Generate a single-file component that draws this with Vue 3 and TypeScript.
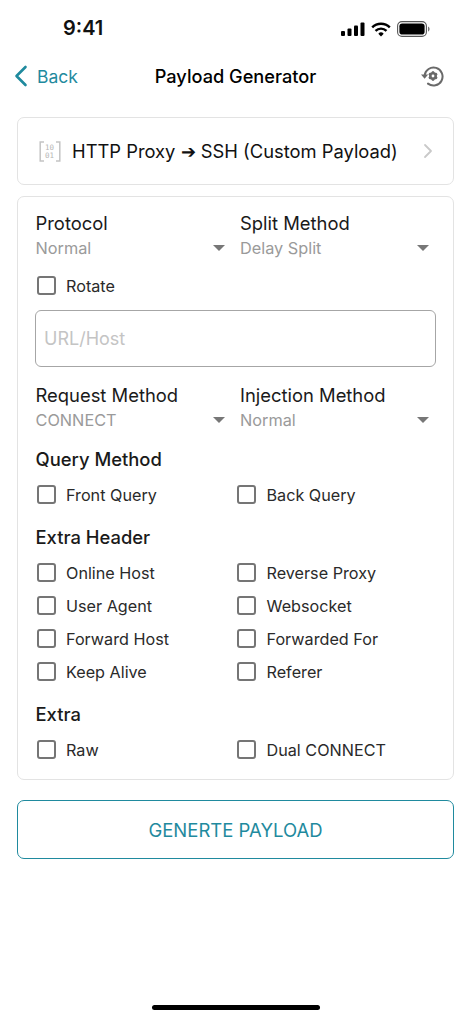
<script setup lang="ts">
const firstSelects = [
  { label: 'Protocol', value: 'Normal' },
  { label: 'Split Method', value: 'Delay Split' },
]
const secondSelects = [
  { label: 'Request Method', value: 'CONNECT' },
  { label: 'Injection Method', value: 'Normal' },
]
const query = ['Front Query', 'Back Query']
const headers = ['Online Host', 'Reverse Proxy', 'User Agent', 'Websocket', 'Forward Host', 'Forwarded For', 'Keep Alive', 'Referer']
const extra = ['Raw', 'Dual CONNECT']
</script>

<template>
  <div class="screen">
    <div class="status">
      <span class="time">9:41</span>
      <div class="status-icons">
        <svg width="24" height="14" viewBox="0 0 24 14"><rect x="0" y="9" width="4" height="5" rx="1"/><rect x="6.5" y="6.5" width="4" height="7.5" rx="1"/><rect x="13" y="3.5" width="4" height="10.5" rx="1"/><rect x="19.5" y="0.5" width="4" height="13.5" rx="1"/></svg>
        <svg width="20" height="15" viewBox="0 0 20 15" fill="none" stroke="#000" stroke-width="2.4"><path d="M1.2 5.4a12.6 12.6 0 0 1 17.6 0"/><path d="M4.5 8.8a8 8 0 0 1 11 0"/><path d="M10 14.4 7.3 11.7a3.8 3.8 0 0 1 5.4 0Z" fill="#000" stroke="none"/></svg>
        <svg width="33" height="16" viewBox="0 0 33 16"><rect x="0.6" y="0.6" width="28.8" height="14.8" rx="4.4" fill="none" stroke="#555" stroke-width="1.1"/><rect x="2.4" y="2.4" width="25.2" height="11.2" rx="2.8"/><path d="M31 5.4c1 .4 1.6 1.4 1.6 2.6s-.6 2.2-1.6 2.6Z" fill="#777"/></svg>
      </div>
    </div>

    <header class="nav">
      <div class="back">
        <svg width="14" height="22" viewBox="0 0 14 22" fill="none" stroke="#1f8a9e" stroke-width="2.6" stroke-linecap="round" stroke-linejoin="round"><path d="M11.5 2 2.5 11l9 9"/></svg>
        <span>Back</span>
      </div>
      <h1>Payload Generator</h1>
      <svg class="restore" width="24" height="24" viewBox="0 0 24 24" fill="none" stroke="#6a6a6a" stroke-width="2">
        <path d="M4.6 11.5A9 9 0 1 1 8 19.6" stroke-linecap="round"/>
        <path d="M1 10.6h7.2l-3.6 4.2Z" fill="#6a6a6a" stroke="none"/>
        <circle cx="13" cy="12" r="2.7" stroke-width="2.6"/>
        <path d="M13 7.2v2M13 14.8v2M8.9 9.6l1.7 1M15.4 13.4l1.7 1M8.9 14.4l1.7-1M15.4 10.6l1.7-1" stroke-width="2.2"/>
      </svg>
    </header>

    <main class="content">
      <section class="card picker">
        <svg width="22" height="21" viewBox="0 0 22 21" fill="none" stroke="#c4c4c4" stroke-width="1.5">
          <path d="M5 1H1.2v19H5M17 1h3.8v19H17"/>
          <text x="6" y="9" class="bits">10</text>
          <text x="6" y="17" class="bits">01</text>
        </svg>
        <span class="picker-text">HTTP Proxy ➔ SSH (Custom Payload)</span>
        <svg width="10" height="16" viewBox="0 0 10 16" fill="none" stroke="#c9c9c9" stroke-width="1.8" stroke-linecap="round" stroke-linejoin="round"><path d="M2 2l6 6-6 6"/></svg>
      </section>

      <section class="card form">
        <div class="selects">
          <div v-for="s in firstSelects" :key="s.label" class="select">
            <div class="sel-label">{{ s.label }}</div>
            <div class="sel-value"><span>{{ s.value }}</span><i class="caret"></i></div>
          </div>
        </div>
        <label class="check rotate"><i class="box"></i><span>Rotate</span></label>
        <div class="input">URL/Host</div>
        <div class="selects">
          <div v-for="s in secondSelects" :key="s.label" class="select">
            <div class="sel-label">{{ s.label }}</div>
            <div class="sel-value"><span>{{ s.value }}</span><i class="caret"></i></div>
          </div>
        </div>

        <h2 class="title query-title">Query Method</h2>
        <div class="checks">
          <label v-for="c in query" :key="c" class="check"><i class="box"></i><span>{{ c }}</span></label>
        </div>

        <h2 class="title">Extra Header</h2>
        <div class="checks">
          <label v-for="c in headers" :key="c" class="check"><i class="box"></i><span>{{ c }}</span></label>
        </div>

        <h2 class="title">Extra</h2>
        <div class="checks">
          <label v-for="c in extra" :key="c" class="check"><i class="box"></i><span>{{ c }}</span></label>
        </div>
      </section>

      <button class="generate" type="button">GENERTE PAYLOAD</button>
    </main>

    <div class="home"></div>
  </div>
</template>

<style>
html, body { margin: 0; background: #fff; }
</style>

<style scoped>
.screen {
  width: 471px;
  height: 1019px;
  position: relative;
  overflow: hidden;
  background: #fff;
  color: #111;
  font-family: Inter, "Liberation Sans", sans-serif;
  box-sizing: border-box;
}
.status {
  height: 56px;
  display: flex;
  justify-content: space-between;
  align-items: flex-start;
  padding: 16px 41px 0 63px;
  box-sizing: border-box;
}
.time { font-size: 20px; font-weight: 600; line-height: 24px; color: #111; }
.status-icons { display: flex; align-items: center; gap: 6px; padding-top: 5px; }
.nav {
  height: 40px;
  display: flex;
  align-items: center;
  justify-content: space-between;
  padding: 0 27px 0 14px;
  position: relative;
}
.back { display: flex; align-items: center; gap: 9px; color: #1f8a9e; font-size: 17.5px; }
.nav h1 {
  position: absolute;
  left: 0;
  right: 0;
  text-align: center;
  margin: 0;
  font-size: 18.2px;
  font-weight: 500;
  color: #000;
  pointer-events: none;
}
.content { padding: 21px 17px 0; display: flex; flex-direction: column; }
.card {
  border: 1.5px solid #e3e3e3;
  border-radius: 7px;
  box-sizing: border-box;
  background: #fff;
}
.picker {
  height: 68px;
  display: flex;
  align-items: center;
  padding: 0 20px 0 21px;
}
.bits { font-family: "DejaVu Sans Mono", monospace; font-size: 7.5px; fill: #b5b5b5; stroke: none; }
.picker-text { flex: 1; margin-left: 11px; font-size: 18.35px; color: #111; white-space: nowrap; }
.form {
  margin-top: 11px;
  height: 584px;
  padding: 14px 17px 0 17.5px;
}
.selects { display: grid; grid-template-columns: 204.5px 197px; }
.sel-label { font-size: 18.4px; line-height: 25px; color: #1a1a1a; }
.sel-value {
  display: flex;
  justify-content: space-between;
  align-items: center;
  height: 23px;
  margin-bottom: 2px;
  font-size: 16.3px;
  color: #9a9a9a;
}
.caret {
  width: 0;
  height: 0;
  border-left: 6px solid transparent;
  border-right: 6px solid transparent;
  border-top: 6px solid #777;
}
.selects .select:first-child .sel-value { padding-right: 15px; }
.selects .select:last-child .sel-value { padding-right: 8px; }
.check {
  display: flex;
  align-items: center;
  height: 33px;
  font-size: 16.2px;
  color: #2a2a2a;
}
.box {
  width: 19px;
  height: 19px;
  border: 2.2px solid #757575;
  border-radius: 3px;
  box-sizing: border-box;
  margin: 0 10.5px 0 1px;
  flex: none;
}
.rotate { margin-top: 8px; }
.input {
  margin-top: 8px;
  margin-left: -0.5px;
  width: 401px;
  height: 57px;
  border: 1.5px solid #a6a6a6;
  border-radius: 6px;
  box-sizing: border-box;
  display: flex;
  align-items: center;
  padding-left: 8px;
  font-size: 18px;
  color: #c4c4c4;
}
.input + .selects { margin-top: 16px; }
.title {
  margin: 0;
  font-size: 18.4px;
  font-weight: 500;
  line-height: 24px;
  color: #1a1a1a;
  margin-top: 13.5px;
  margin-bottom: 7.5px;
}
.query-title { margin-top: 14px; margin-bottom: 7px; }
.checks { display: grid; grid-template-columns: 200.5px 1fr; }
.generate {
  margin-top: 20px;
  height: 59px;
  border: 1.5px solid #1f8a9e;
  border-radius: 7px;
  background: #fff;
  color: #1f8a9e;
  font-family: inherit;
  font-size: 18.5px;
  font-weight: 400;
  padding: 0;
}
.home {
  position: absolute;
  left: 152px;
  bottom: 9px;
  width: 168px;
  height: 5px;
  border-radius: 3px;
  background: #000;
}
</style>
